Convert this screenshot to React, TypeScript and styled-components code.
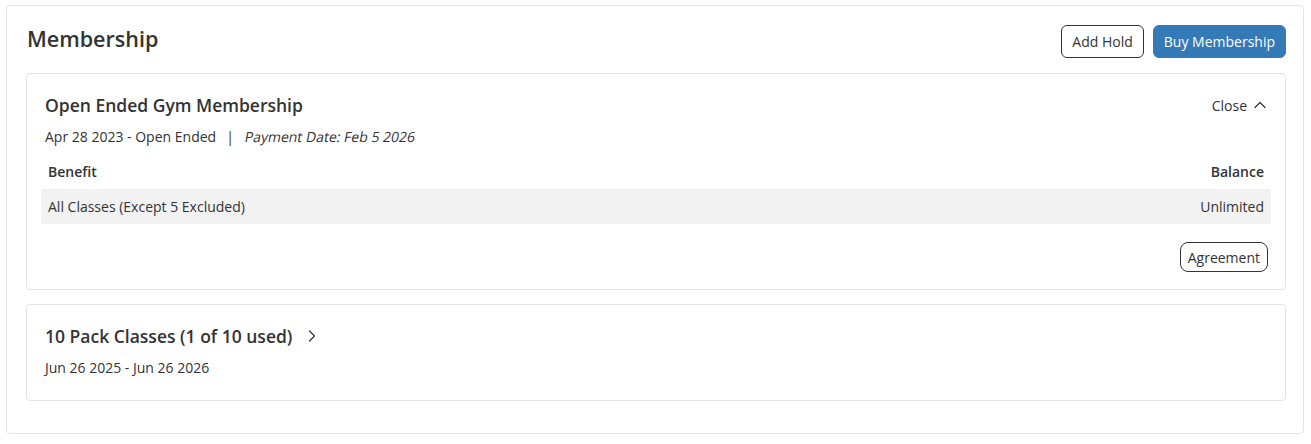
import React from "react";
import styled, { createGlobalStyle } from "styled-components";

const Global = createGlobalStyle`
  html, body { margin: 0; padding: 0; background: #fff; }
  body { font-family: "Open Sans", "Noto Sans", sans-serif; color: #333; }
  * { box-sizing: border-box; }
`;

const Page = styled.div`
  padding: 5px 7px 0 6px;
`;

const Panel = styled.section`
  border: 1px solid #e3e3e3;
  border-radius: 4px;
  padding: 19px 17px 32px 19px;
  display: flex;
  flex-direction: column;
  gap: 14px;
`;

const PanelHeader = styled.div`
  display: flex;
  align-items: flex-start;
  justify-content: space-between;
  height: 33px;
  margin-bottom: 1px;
`;

const Title = styled.h2`
  margin: 0 0 0 1px;
  font-size: 21.5px;
  font-weight: 600;
  color: #333;
  line-height: 27px;
`;

const Actions = styled.div`
  display: flex;
  gap: 9px;
`;

const Button = styled.button<{ $primary?: boolean }>`
  font-family: inherit;
  font-size: 14px;
  height: 33px;
  padding: 0 10px;
  border-radius: 6px;
  cursor: pointer;
  border: 1px solid ${(p) => (p.$primary ? "#337ab7" : "#333")};
  background: ${(p) => (p.$primary ? "#337ab7" : "#fff")};
  color: ${(p) => (p.$primary ? "#fff" : "#333")};
`;

const SmallButton = styled(Button)`
  height: 30px;
  padding: 0 7px;
  border-radius: 8px;
`;

const Card = styled.div<{ $pb: number }>`
  border: 1px solid #e3e3e3;
  border-radius: 4px;
  padding: 19px 14px ${(p) => p.$pb}px 14px;
`;

const CardHead = styled.div`
  display: flex;
  align-items: center;
  justify-content: space-between;
  padding: 0 4px;
  height: 24px;
`;

const CardTitle = styled.h3`
  margin: 0;
  font-size: 17.5px;
  font-weight: 600;
  line-height: 24px;
  color: #333;
  display: flex;
  align-items: center;
  gap: 14px;
`;

const Toggle = styled.span`
  display: flex;
  align-items: center;
  gap: 7px;
  font-size: 14px;
  color: #333;
  margin-right: 1px;
`;

const Dates = styled.div`
  margin-top: 10px;
  padding: 0 4px;
  font-size: 14px;
  line-height: 20px;
  color: #333;
`;

const Sep = styled.span`
  margin: 0 10px;
`;

const Oblique = styled.span`
  display: inline-block;
  font-style: normal;
  transform: skewX(-11deg);
  transform-origin: 0 75%;
`;

const Table = styled.div`
  margin-top: 7px;
  display: flex;
  flex-direction: column;
`;

const Row = styled.div<{ $shade?: boolean; $head?: boolean }>`
  display: flex;
  justify-content: space-between;
  align-items: center;
  height: 35px;
  padding: 0 7px;
  font-size: 14px;
  font-weight: ${(p) => (p.$head ? 600 : 400)};
  background: ${(p) => (p.$shade ? "#f2f2f2" : "transparent")};
  color: #333;
`;

const Footer = styled.div`
  display: flex;
  justify-content: flex-end;
  margin-top: 18px;
  padding-right: 3px;
`;

const Chevron = ({ dir }: { dir: "up" | "right" }) => (
  <svg width="12" height="12" viewBox="0 0 12 12" fill="none" stroke="#333" strokeWidth="1.2" strokeLinecap="round" strokeLinejoin="round">
    {dir === "up" ? <path d="M1 8.5 L6 3.5 L11 8.5" /> : <path d="M3.5 1 L8.5 6 L3.5 11" />}
  </svg>
);

export default function App() {
  return (
    <>
      <Global />
      <Page>
        <Panel>
          <PanelHeader>
            <Title>Membership</Title>
            <Actions>
              <Button>Add Hold</Button>
              <Button $primary>Buy Membership</Button>
            </Actions>
          </PanelHeader>

          <Card $pb={17}>
            <CardHead>
              <CardTitle>Open Ended Gym Membership</CardTitle>
              <Toggle>
                Close <Chevron dir="up" />
              </Toggle>
            </CardHead>
            <Dates>
              Apr 28 2023 - Open Ended<Sep>|</Sep>
              <Oblique>Payment Date: Feb 5 2026</Oblique>
            </Dates>
            <Table>
              <Row $head>
                <span>Benefit</span>
                <span>Balance</span>
              </Row>
              <Row $shade>
                <span>All Classes (Except 5 Excluded)</span>
                <span>Unlimited</span>
              </Row>
            </Table>
            <Footer>
              <SmallButton>Agreement</SmallButton>
            </Footer>
          </Card>

          <Card $pb={22}>
            <CardHead>
              <CardTitle>
                10 Pack Classes (1 of 10 used) <Chevron dir="right" />
              </CardTitle>
            </CardHead>
            <Dates>Jun 26 2025 - Jun 26 2026</Dates>
          </Card>
        </Panel>
      </Page>
    </>
  );
}
